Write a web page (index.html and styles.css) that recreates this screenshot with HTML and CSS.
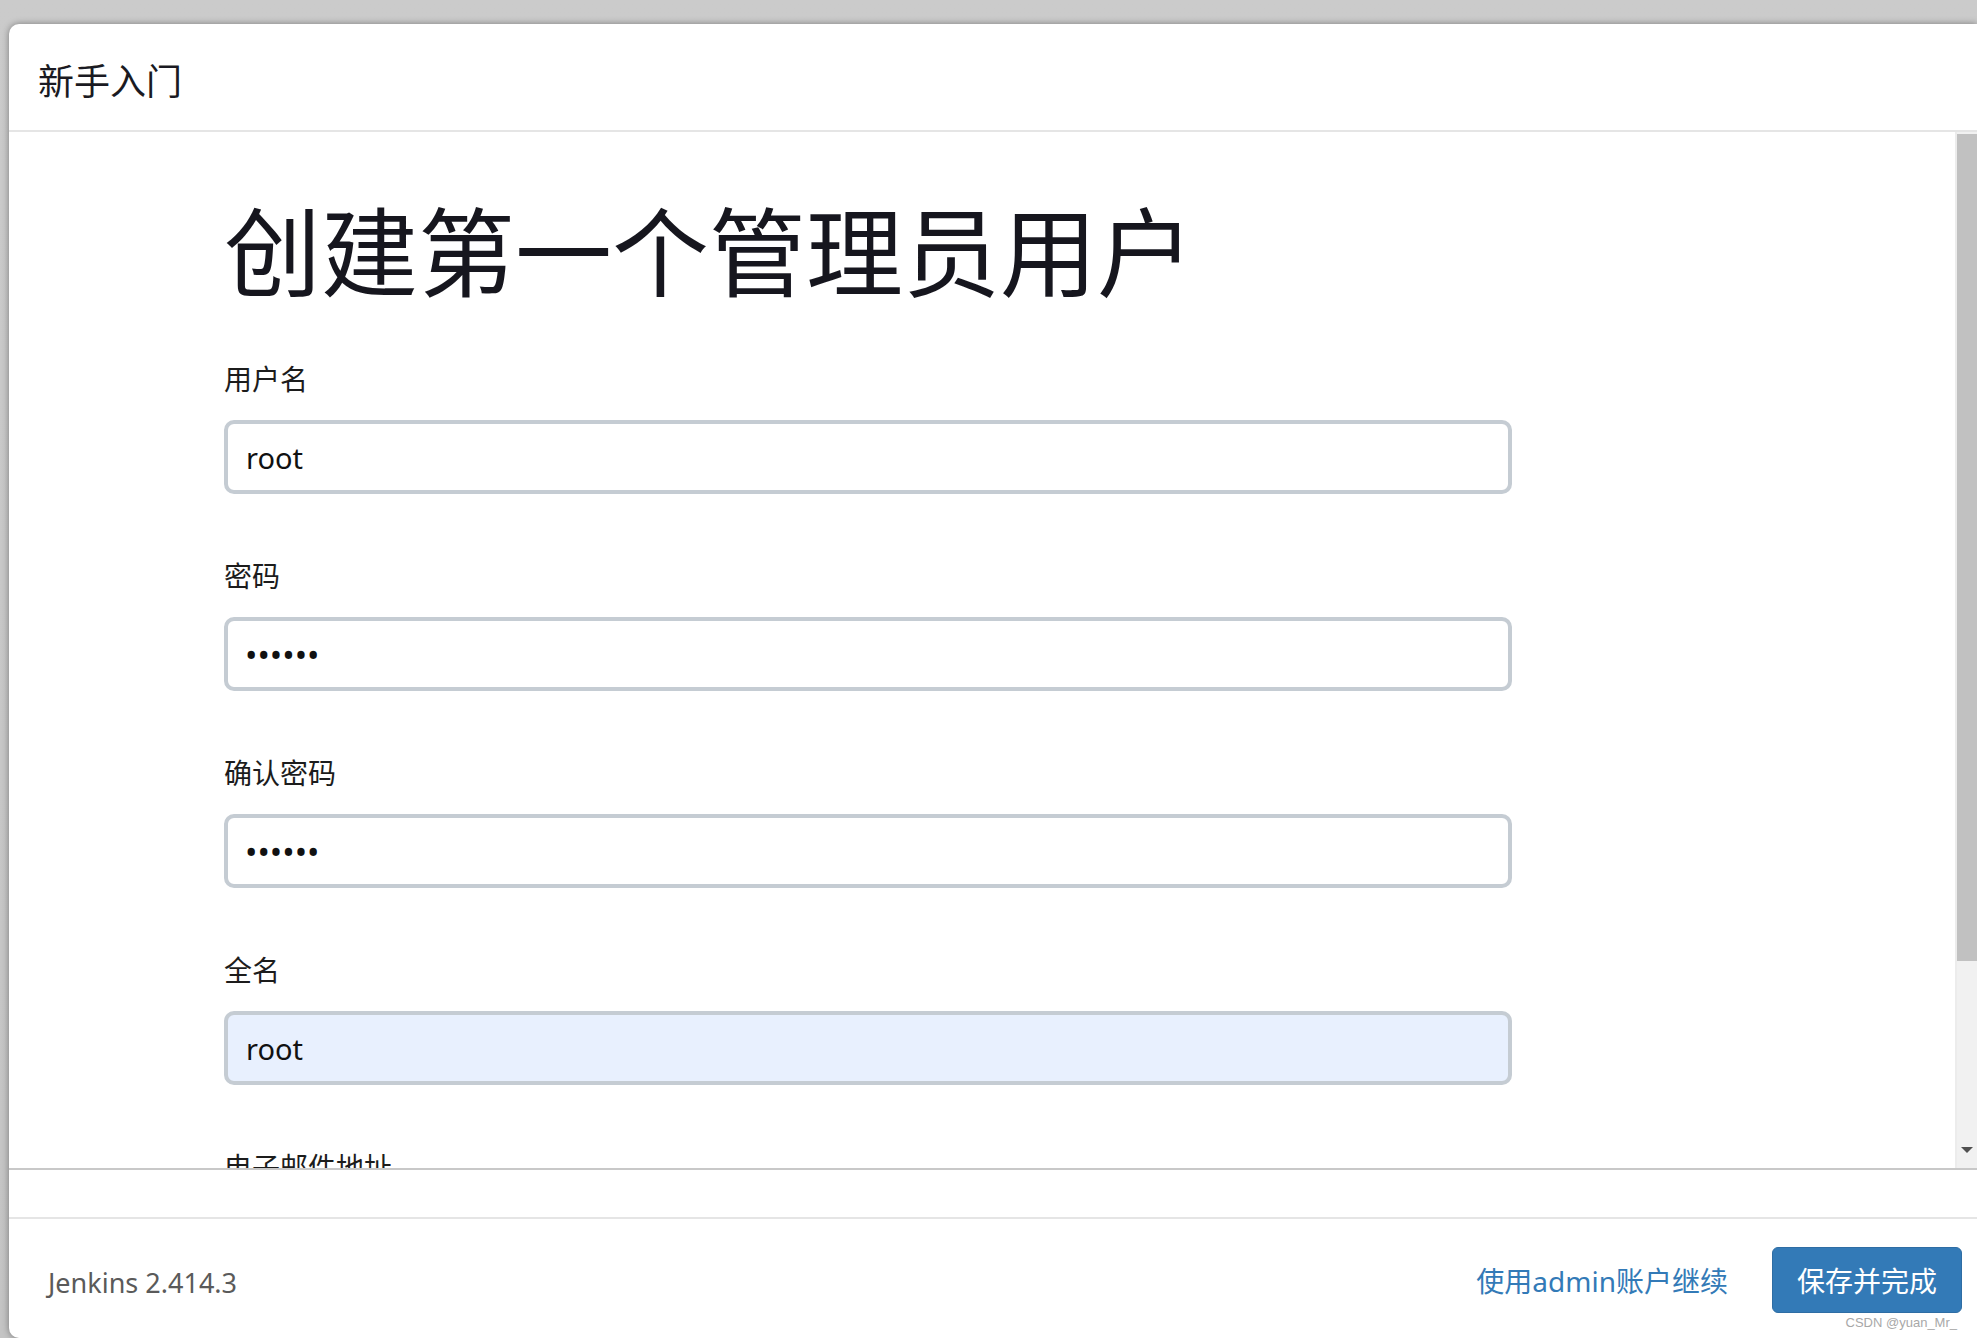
FILE: index.html
```html
<!DOCTYPE html>
<html>
<head>
  <meta charset="UTF-8">
  <meta name="viewport" content="width=device-width, initial-scale=1.0">
  <title>Jenkins - 新手入门</title>
  <link rel="stylesheet" href="styles.css">
</head>
<body>
  <div class="modal">
    <div class="modal-header">
      <h4>新手入门</h4>
    </div>

    <div class="modal-body">
      <div class="content">
        <h1>创建第一个管理员用户</h1>

        <div class="field">
          <label>用户名</label>
          <input type="text" value="root">
        </div>
        <div class="field">
          <label>密码</label>
          <input type="password" value="123456">
        </div>
        <div class="field">
          <label>确认密码</label>
          <input type="password" value="123456">
        </div>
        <div class="field">
          <label>全名</label>
          <input type="text" class="autofill" value="root">
        </div>
        <div class="field">
          <label>电子邮件地址</label>
          <input type="text" value="">
        </div>
      </div>
      <div class="scrollbar">
        <div class="thumb"></div>
        <div class="arrow-down"></div>
      </div>
    </div>

    <div class="band"></div>

    <div class="modal-footer">
      <span class="version">Jenkins 2.414.3</span>
      <a class="skip" href="#">使用admin账户继续</a>
      <button class="btn-primary">保存并完成</button>
    </div>
  </div>

  <span class="watermark">CSDN @yuan_Mr_</span>
</body>
</html>
```

FILE: styles.css
```css
body {
  margin: 0;
  height: 1338px;
  overflow: hidden;
  background: linear-gradient(#cbcbcb, #c4c4c4);
  font-family: "Noto Sans", "Noto Sans CJK SC", sans-serif;
  color: #1a1a22;
}
.modal {
  margin: 24px 0 0 9px;
  height: 1314px;
  background: #fff;
  border-radius: 10px 0 0 10px;
  box-shadow: 0 0 7px rgba(0, 0, 0, 0.4);
  display: flex;
  flex-direction: column;
}
.modal-header {
  height: 106px;
  border-bottom: 2px solid #e5e5e5;
  display: flex;
  align-items: center;
  padding-left: 29px;
}
.modal-header h4 {
  margin: 0;
  font-size: 36px;
  font-weight: normal;
  padding-top: 4px;
}
.modal-body {
  height: 1036px;
  border-bottom: 2px solid #c8c8c8;
  display: flex;
  overflow: hidden;
}
.content {
  flex: 1;
  padding: 62px 0 0 215px;
}
h1 {
  margin: 0 0 50px;
  font-size: 97px;
  line-height: 114px;
  font-weight: normal;
  color: #16161e;
}
.field {
  margin-bottom: 61px;
}
.field label {
  display: block;
  font-size: 28px;
  line-height: 39px;
  padding-top: 2px;
  margin-bottom: 21px;
  color: #1c1c1c;
}
.field input {
  display: block;
  box-sizing: border-box;
  width: 1288px;
  height: 74px;
  border: 4px solid #c5ccd3;
  border-radius: 10px;
  padding: 0 18px;
  font-family: inherit;
  font-size: 29px;
  color: #111;
  background: #fff;
  outline: none;
}
.field input[type="password"] {
  font-size: 33px;
  padding-left: 17px;
}
.field input.autofill {
  background: #e8f0fe;
}
.scrollbar {
  width: 20px;
  border-left: 2px solid #ececec;
  background: #f1f1f1;
  display: flex;
  flex-direction: column;
  align-items: center;
}
.thumb {
  margin-top: 2px;
  width: 100%;
  height: 827px;
  background: #c1c1c1;
}
.arrow-down {
  margin-top: auto;
  margin-bottom: 15px;
  width: 0;
  height: 0;
  border-left: 6px solid transparent;
  border-right: 6px solid transparent;
  border-top: 6px solid #505050;
}
.band {
  height: 47px;
  border-bottom: 2px solid #e5e5e5;
}
.modal-footer {
  flex: 1;
  display: flex;
  align-items: center;
  padding: 2px 15px 0 39px;
}
.version {
  font-size: 27px;
  color: #5a5a5a;
  padding-top: 6px;
}
.skip {
  margin-left: auto;
  margin-right: 44px;
  font-size: 28px;
  color: #337ab7;
  text-decoration: none;
}
.btn-primary {
  width: 190px;
  height: 66px;
  background: #337ab7;
  border: 1px solid #2e6da4;
  border-radius: 6px;
  color: #fff;
  font-family: inherit;
  font-size: 28px;
  padding: 0;
}
.watermark {
  position: absolute;
  right: 20px;
  bottom: 8px;
  font-family: "Liberation Sans", sans-serif;
  font-size: 13px;
  color: #a8a8a8;
}
```
